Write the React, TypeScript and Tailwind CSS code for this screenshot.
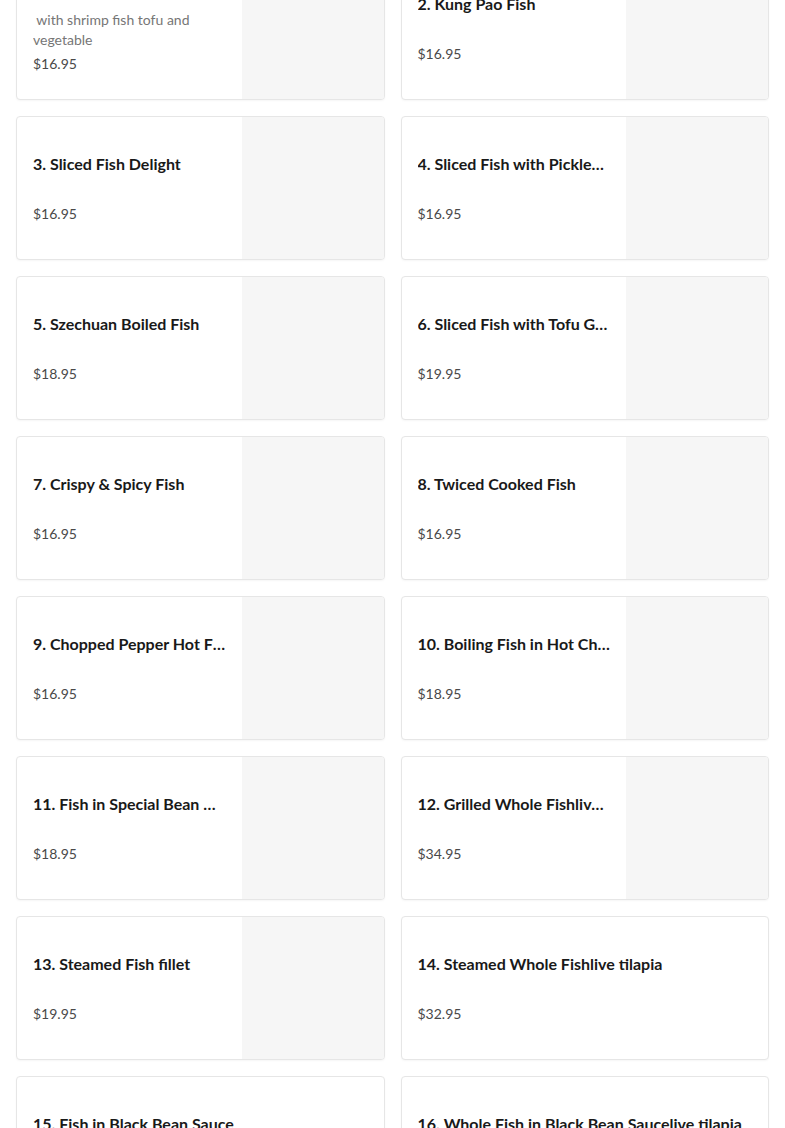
import React from "react";

type Item = { title: string; price: string; desc?: string; image?: boolean };

const items: Item[] = [
  { title: "1. Seafood Tofu Stew", price: "$16.95", desc: "\u00a0with shrimp fish tofu and vegetable", image: true },
  { title: "2. Kung Pao Fish", price: "$16.95", image: true },
  { title: "3. Sliced Fish Delight", price: "$16.95", image: true },
  { title: "4. Sliced Fish with Pickled Vegetable", price: "$16.95", image: true },
  { title: "5. Szechuan Boiled Fish", price: "$18.95", image: true },
  { title: "6. Sliced Fish with Tofu Golden Soup", price: "$19.95", image: true },
  { title: "7. Crispy & Spicy Fish", price: "$16.95", image: true },
  { title: "8. Twiced Cooked Fish", price: "$16.95", image: true },
  { title: "9. Chopped Pepper Hot Fish", price: "$16.95", image: true },
  { title: "10. Boiling Fish in Hot Chili Oil", price: "$18.95", image: true },
  { title: "11. Fish in Special Bean Curd Sauce", price: "$18.95", image: true },
  { title: "12. Grilled Whole Fishlive tilapia", price: "$34.95", image: true },
  { title: "13. Steamed Fish fillet", price: "$19.95", image: true },
  { title: "14. Steamed Whole Fishlive tilapia", price: "$32.95" },
  { title: "15. Fish in Black Bean Sauce", price: "$18.95" },
  { title: "16. Whole Fish in Black Bean Saucelive tilapia", price: "$32.95" },
];

function Card({ item }: { item: Item }) {
  return (
    <div className="flex h-36 overflow-hidden rounded-[4px] border border-[#e6e6e6] bg-white shadow-[0_1px_2px_rgba(0,0,0,0.04)]">
      <div className="flex min-w-0 flex-1 flex-col justify-center px-4">
        <div className="truncate text-[16px] font-bold leading-6 text-[#191919]">{item.title}</div>
        {item.desc ? (
          <div className="mt-1 line-clamp-2 text-[14px] leading-5 text-[#767676]">{item.desc}</div>
        ) : (
          <div className="h-7" />
        )}
        <div className={`text-[14px] leading-5 text-[#494949] ${item.desc ? "mt-1" : ""}`}>{item.price}</div>
      </div>
      {item.image && <div className="h-full w-[142px] shrink-0 bg-[#f6f6f6]" />}
    </div>
  );
}

export default function App() {
  return (
    <div className="h-[1128px] overflow-hidden bg-white" style={{ fontFamily: "Lato, 'Noto Sans', sans-serif" }}>
      <div className="-mt-[44px] grid grid-cols-2 gap-4 px-4">
        {items.map((it, i) => (
          <Card key={i} item={it} />
        ))}
      </div>
    </div>
  );
}
